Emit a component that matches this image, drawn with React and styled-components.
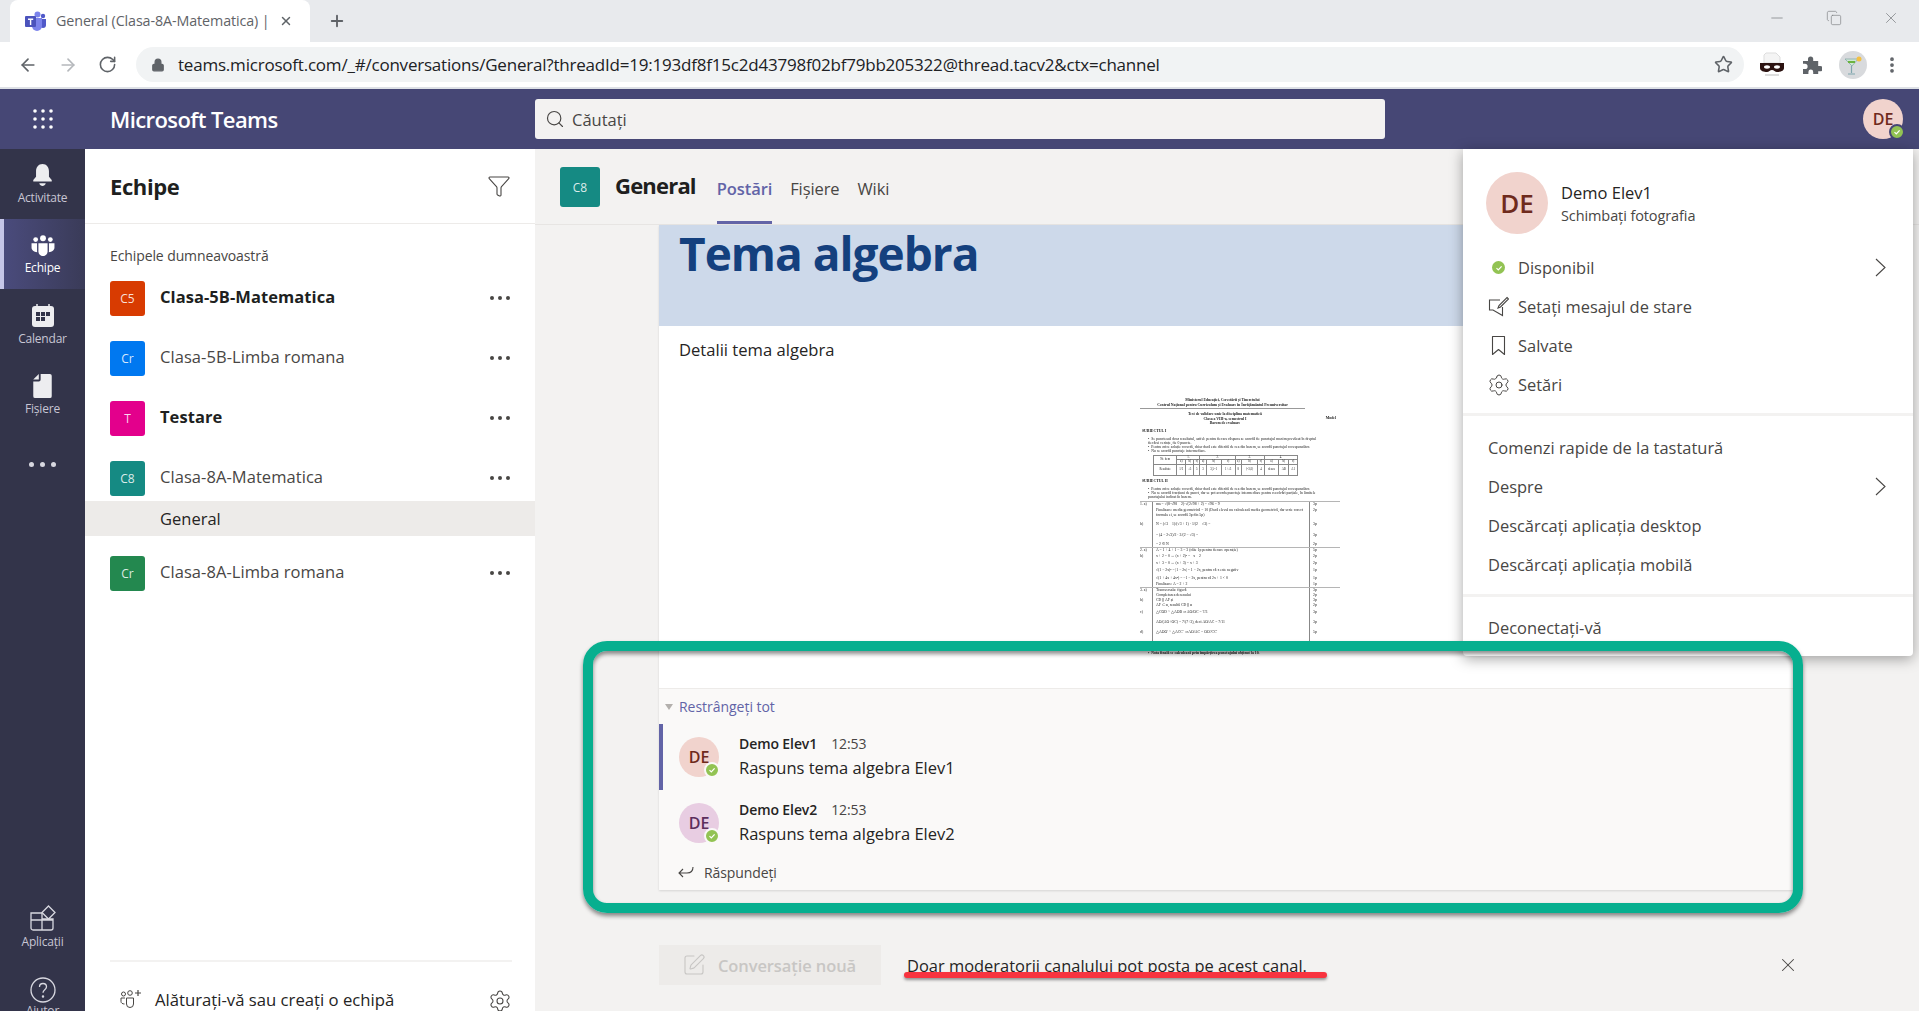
import React from 'react';
import styled, { createGlobalStyle } from 'styled-components';
import { Search, Star, X, Settings, Plus, ArrowLeft, ArrowRight, RotateCw, Lock, Minus, Copy, Filter, SquarePen, MoreVertical } from 'lucide-react';

const FONT = '"Open Sans", "Noto Sans", sans-serif';

const Global = createGlobalStyle`
  html, body { margin: 0; padding: 0; background: #f3f2f1; }
  body { font-family: ${FONT}; color: #252423; }
  * { box-sizing: border-box; }
`;
const Page = styled.div`width: 1919px; height: 1011px; position: relative; overflow: hidden; display: flex; flex-direction: column; background: #f3f2f1;`;

/* browser chrome */
const TabStrip = styled.div`height: 42px; flex: none; background: #e8eaed; display: flex; align-items: stretch; padding-left: 10px;`;
const Tab = styled.div`width: 300px; background: #fff; border-radius: 8px 8px 0 0; display: flex; align-items: center; padding-left: 15px; gap: 10px; font-size: 14.300px; color: #5f6368; letter-spacing: -0.1px;`;
const TabTitle = styled.span`width: 213px; white-space: nowrap; margin-top: -2px;`;
const NewTab = styled.div`width: 54px; display: flex; align-items: center; justify-content: center; color: #5f6368;`;
const WinControls = styled.div`margin-left: auto; display: flex; align-items: center; gap: 40px; padding-right: 19px; padding-bottom: 6px; color: #7b7e82;`;
const Toolbar = styled.div`height: 47px; flex: none; background: #fff; border-bottom: 2px solid #dee1e6; display: flex; align-items: flex-start; padding: 5px 0 0 18px; color: #5f6368;`;
const NavBtn = styled.div`width: 40px; height: 35px; display: flex; align-items: center; justify-content: flex-start; color: ${p => p.$dim ? '#b5b8bc' : '#5f6368'};`;
const Address = styled.div`width: 1608px; height: 35px; margin-left: -2px; background: #f1f3f4; border-radius: 18px; display: flex; align-items: center; padding-left: 15px; gap: 13px; font-size: 17px; color: #202124; letter-spacing: -0.21px;`;
const Url = styled.span`flex: 1; white-space: nowrap;`;
const Ext = styled.div`display: flex; align-items: center; height: 35px; color: #5f6368; margin-left: ${p => p.$ml}px;`;
const ProfileDot = styled.div`width: 28px; height: 28px; border-radius: 50%; background: #d8dadd; display: flex; align-items: center; justify-content: center;`;

/* teams header */
const TopBar = styled.div`height: 60px; flex: none; background: #464775; display: flex; align-items: center; position: relative;`;
const Waffle = styled.div`width: 85px; display: flex; justify-content: center;`;
const Brand = styled.div`width: 450px; padding-left: 25px; color: #fff; font-size: 22px; font-weight: 600; letter-spacing: -0.58px;`;
const SearchBox = styled.div`width: 850px; height: 40px; background: #f3f2f1; border-radius: 3px; display: flex; align-items: center; padding-left: 10px; gap: 7px; color: #484644; font-size: 16.500px;`;
const Avatar = styled.div`
  width: ${p => p.$s}px; height: ${p => p.$s}px; border-radius: 50%; flex: none; position: relative;
  background: ${p => p.$bg || '#f1d3cd'}; color: ${p => p.$fg || '#6f2a1c'};
  display: flex; align-items: center; justify-content: center; font-size: ${p => p.$fs}px; font-weight: 600;
`;
const TopAvatarSlot = styled.div`margin-left: auto; padding-right: 16px;`;
const Badge = styled.span`
  position: absolute; right: ${p => p.$o ?? -2}px; bottom: ${p => p.$o ?? -1}px; width: 16px; height: 16px; border-radius: 50%;
  background: #92c353; border: 2px solid ${p => p.$ring}; display: flex; align-items: center; justify-content: center;
`;
const StatusDot = styled.span`width: 13px; height: 13px; border-radius: 50%; background: #92c353; display: flex; align-items: center; justify-content: center;`;

/* body */
const Body = styled.div`flex: 1; display: flex; min-height: 0;`;
const Rail = styled.nav`width: 85px; flex: none; background: #33344a; display: flex; flex-direction: column; overflow: hidden;`;
const RailItem = styled.div`
  height: 70px; flex: none; position: relative; display: flex; flex-direction: column; align-items: center; padding-top: ${p => p.$pt ?? 15}px;
  font-size: 12px; letter-spacing: -0.2px; color: ${p => p.$active ? '#fff' : '#c8c6d4'};
  background: ${p => p.$active ? 'linear-gradient(90deg,#4a4b7c,#3a3b58)' : 'transparent'};
  border-left: ${p => p.$active ? '4px solid #c5c6e8' : 'none'};
  padding-right: ${p => p.$active ? '4px' : '0'};
  margin-top: ${p => p.$mt || 0}px;
`;
const RailLabel = styled.span`margin-top: ${p => p.$mt ?? 3}px; line-height: 16px; white-space: nowrap;`;
const RailDots = styled.div`height: 40px; display: flex; align-items: center; justify-content: center; gap: 6px; flex: none; margin-top: 15px;`;
const Dot = styled.i`width: ${p => p.$s || 4}px; height: ${p => p.$s || 4}px; border-radius: 50%; background: ${p => p.$c || '#d8d8e0'}; display: block;`;

const Side = styled.aside`width: 450px; flex: none; background: #fff; display: flex; flex-direction: column; overflow: hidden;`;
const SideHead = styled.div`height: 75px; flex: none; border-bottom: 1px solid #edebe9; display: flex; align-items: center; justify-content: space-between; padding: 0 24px 0 25px; font-size: 22px; font-weight: 700; color: #201f1e; letter-spacing: -0.4px;`;
const SideCaption = styled.div`height: 26px; margin-top: 18px; flex: none; padding-left: 25px; font-size: 14px; line-height: 28px; color: #484644; letter-spacing: -0.1px;`;
const TeamRow = styled.div`height: ${p => p.$h || 60}px; flex: none; display: flex; align-items: center; padding: 0 25px; margin-top: ${p => p.$mt || 0}px;`;
const Tile = styled.div`
  width: ${p => p.$s || 35}px; height: ${p => p.$s || 35}px; flex: none; border-radius: 3px; background: ${p => p.$bg}; color: rgba(255,255,255,.85);
  display: flex; align-items: center; justify-content: center; font-size: 12px;
`;
const TeamName = styled.span`
  margin: -4px 0 0 15px; flex: 1; font-size: 16.500px; letter-spacing: 0.06px; color: ${p => p.$bold ? '#201f1e' : '#484644'}; font-weight: ${p => p.$bold ? 700 : 400};
`;
const Dots = styled.div`display: flex; gap: 4px;`;
const Channel = styled.div`height: 35px; flex: none; margin-top: -7px; position: relative; background: #edebe9; padding-left: 75px; line-height: 35px; font-size: 16.500px; color: #252423;`;
const FootText = styled.span`margin-left: 13px; flex: 1; line-height: 22px;`;
const FootWrap = styled.div`margin-top: auto; height: 91px; flex: none; margin-left: 25px; margin-right: 23px; border-top: 2px solid #f3f2f1; padding: 27px 0 0 10px; display: flex; align-items: flex-start; font-size: 16.700px; color: #252423; margin-bottom: -40px;`;

const Main = styled.main`flex: 1; min-width: 0; display: flex; flex-direction: column; overflow: hidden;`;
const MainHead = styled.div`height: 76px; flex: none; display: flex; align-items: stretch; padding-left: 25px; border-bottom: 1px solid #e7e5e3;`;
const HeadTile = styled.div`align-self: flex-start; margin-top: 18px;`;
const ChannelTitle = styled.div`margin-left: 15px; font-size: 22px; font-weight: 700; line-height: 36px; padding-top: 18px; color: #201f1e; letter-spacing: -0.8px;`;
const Tabs = styled.div`display: flex; gap: 18px; margin-left: 21px;`;
const TabLink = styled.div`
  font-size: 16.500px; line-height: 22px; padding-top: 29px; height: 75px; color: ${p => p.$on ? '#6264a7' : '#484644'}; font-weight: ${p => p.$on ? 600 : 400};
  border-bottom: 3px solid ${p => p.$on ? '#6264a7' : 'transparent'}; letter-spacing: -0.1px;
`;
const Card = styled.article`width: 1134px; margin-left: 124px; flex: none; background: #fff; box-shadow: 0 1px 2px rgba(0,0,0,.12);`;
const Hero = styled.div`height: 101px; background: #cdd9ea; padding: 0 20px; color: #14407e; font-size: 46px; font-weight: 700; line-height: 56px; letter-spacing: -1px;`;
const CardBody = styled.div`height: 362px; padding: 12px 20px 0; overflow: hidden; font-size: 16.600px; line-height: 23px; color: #252423;`;
const Thread = styled.div`height: 202px; background: #faf9f8; border-top: 1px solid #edebe9; display: flex; flex-direction: column;`;
const Collapse = styled.div`height: 35px; flex: none; padding-left: 6px; display: flex; align-items: center; gap: 6px; color: #6264a7; font-size: 14px; letter-spacing: -0.03px;`;
const Caret = styled.i`width: 0; height: 0; border: 4px solid transparent; border-top: 6px solid #b3b0ad; border-bottom: 0; margin-left: 0;`;
const Reply = styled.div`
  height: 66px; flex: none; display: flex; padding: 13px 0 0 ${p => p.$on ? 16 : 20}px; border-left: ${p => p.$on ? '4px solid #6264a7' : 'none'};
`;
const ReplyText = styled.div`margin-left: 20px;`;
const Meta = styled.div`display: flex; gap: 14px; font-size: 14px; line-height: 20px; margin-top: -3px; color: #484644; letter-spacing: -0.1px;`;
const Who = styled.b`font-weight: 600; color: #252423;`;
const Msg = styled.div`font-size: 16.500px; line-height: 28px; color: #252423;`;
const Answer = styled.div`height: 34px; margin-top: -1px; padding-left: 19px; display: flex; align-items: center; gap: 10px; font-size: 14px; color: #484644; letter-spacing: -0.1px;`;
const Bottom = styled.div`height: 40px; margin-top: 55px; margin-left: 124px; flex: none; display: flex; align-items: center; width: 1140px;`;
const NewBtn = styled.div`width: 222px; height: 40px; background: #edebe9; display: flex; align-items: center; padding-left: 23px; gap: 12px; color: #c8c6c4; font-size: 16.500px; font-weight: 600; letter-spacing: -0.1px;`;
const Notice = styled.div`margin-left: 26px; flex: 1; font-size: 16.450px; color: #252423;`;
const CloseIcon = styled.div`color: #484644; display: flex;`;

/* menu */
const Menu = styled.div`position: absolute; left: 1463px; top: 149px; width: 450px; height: 507px; background: #fff; border-radius: 0 0 4px 4px; box-shadow: 0 3px 14px rgba(0,0,0,.35); color: #484644; font-size: 16.450px;`;
const MenuHead = styled.div`height: 99px; padding: 23px 0 0 23px; display: flex; gap: 13px;`;
const MenuName = styled.div`font-size: 16.500px; line-height: 24px; margin-top: 9px; color: #252423; font-weight: 500;`;
const MenuSub = styled.div`font-size: 14.500px; line-height: 22px; color: #484644; letter-spacing: -0.1px;`;
const MenuList = styled.div`padding: ${p => p.$pad || '0'}; border-bottom: ${p => p.$last ? 'none' : '3px solid #f3f2f1'};`;
const MenuRow = styled.div`height: 39px; display: flex; align-items: center; padding: 0 27px 0 25px;`;
const MenuIcon = styled.div`width: 30px; flex: none; display: flex; padding-left: ${p => p.$pl || 0}px;`;
const Grow = styled.span`flex: 1;`;

/* annotations */
const GreenBox = styled.div`position: absolute; left: 583px; top: 641px; width: 1220px; height: 272px; border: 10px solid #07af8f; border-radius: 24px; box-shadow: 0 3px 4px rgba(0,0,0,.45), inset 0 3px 4px rgba(0,0,0,.45); pointer-events: none; `;
const RedLine = styled.div`position: absolute; left: 904px; top: 972px; width: 423px; height: 6px; border-radius: 3px; background: #f8333f; box-shadow: 0 2px 3px rgba(0,0,0,.4);`;

/* scanned document */
const Doc = styled.div`margin: 37px 0 0 461px; width: 200px; font-family: "Liberation Serif", serif; font-size: 3.800px; line-height: 4.600px; color: #222; filter: blur(0.25px);`;
const DocHead = styled.div`width: 165px; text-align: center; font-weight: 700; border-bottom: 1px solid #999; padding-bottom: 1px;`;
const DocTitle = styled.div`width: 170px; margin-top: 3px; text-align: center; font-weight: 700; position: relative;`;
const DocModel = styled.span`position: absolute; right: -26px; top: 4px;`;
const DocSub = styled.div`font-weight: 700; margin: ${p => p.$m || '3px 0 3px 2px'};`;
const DocBullet = styled.div`margin-left: 8px; width: 172px; line-height: 4.300px; font-weight: ${p => p.$b ? 700 : 400}; &::before { content: "•"; margin-right: 2px; }`;
const DocTable = styled.table`margin: 1px 0 2px 13px; width: 145px; border-collapse: collapse; font-size: 3px; line-height: 3.400px; td { border: 0.6px solid #888; text-align: center; padding: 0; height: 4.500px; }`;
const DocTallCell = styled.td`&& { height: 11.500px; }`;
const DocGroup = styled.div`border-top: 1px solid #b5b5b5; margin-top: ${p => p.$mt || 0}px;`;
const DocRow = styled.div`display: grid; grid-template-columns: 12px 157px 31px; height: ${p => p.$h || 5}px; align-items: center;`;
const DocCell = styled.span`height: 100%; display: flex; align-items: center; padding-left: ${p => p.$pl || 0}px; border-left: ${p => p.$line ? '0.7px solid #888' : 'none'}; white-space: nowrap; overflow: hidden;`;

const check = (
  <svg width="8" height="8" viewBox="0 0 8 8"><path d="M1.500 4.200 3.300 6 6.600 2.300" fill="none" stroke="#fff" strokeWidth="1.200" /></svg>
);

const TeamsLogo = () => (
  <svg width="21" height="20" viewBox="0 0 21 20">
    <circle cx="12.500" cy="3.500" r="3" fill="#7b83eb" /><circle cx="18" cy="5" r="2.200" fill="#5059c9" />
    <path d="M15 8h6v6a3 3 0 0 1-6 0z" fill="#5059c9" /><path d="M7 7h10v8a5 5 0 0 1-10 0z" fill="#7b83eb" />
    <rect x="0" y="5" width="11" height="11" rx="1" fill="#4b53bc" />
    <path d="M3 7.500h5.200v1.400H6.300v5H4.900v-5H3z" fill="#fff" />
  </svg>
);

const MaskIcon = () => (
  <svg width="26" height="26" viewBox="0 0 26 26">
    <path d="M7 1h10l4 4v6H5V3z" fill="#f4f4f4" stroke="#ddd" /><path d="M1 11h24v5c0 3-4 4-7 4-2 0-3-2-5-2s-3 2-5 2c-3 0-7-1-7-4z" fill="#2b1210" />
    <ellipse cx="8" cy="15" rx="3" ry="1.700" fill="#fff" /><ellipse cx="18" cy="15" rx="3" ry="1.700" fill="#fff" />
    <rect x="6" y="22" width="14" height="2" fill="#ddd" />
  </svg>
);
const PuzzleIcon = () => (
  <svg width="20" height="20" viewBox="0 0 20 20" fill="#5f6368">
    <path d="M1 6h5V4a2.600 2.600 0 0 1 5.200 0v2h5v5h2a2.600 2.600 0 0 1 0 5.200h-2V19h-5v-2a2.400 2.400 0 0 0-4.800 0v2H1v-5h2a2.600 2.600 0 0 0 0-5.200H1z" />
  </svg>
);
const Cocktail = () => (
  <svg width="20" height="22" viewBox="0 0 20 22">
    <path d="M2 5h13l-6 7z" fill="#cfe8d4" stroke="#8aa" strokeWidth=".8" /><path d="M5 8h7" stroke="#6cb33f" strokeWidth="2" />
    <path d="M8.500 12v7M5 20h7" stroke="#7fa6ad" strokeWidth="1.200" /><circle cx="16" cy="5" r="2.500" fill="#f2c043" />
  </svg>
);
const Bell = () => (
  <svg width="23" height="24" viewBox="0 0 24 26" fill="#ededf0">
    <path d="M12 1c-4.500 0-7 3.500-7 8v6l-3 3.500V20h20v-1.500L19 15V9c0-4.500-2.500-8-7-8z" /><path d="M8.500 22h7c-.5 2-2 3-3.500 3s-3-1-3.500-3z" />
  </svg>
);
const TeamsGlyph = () => (
  <svg width="26" height="22" viewBox="0 0 28 24" fill="#fff">
    <circle cx="14" cy="3.500" r="3.200" /><circle cx="6" cy="5" r="2.600" /><circle cx="22" cy="5" r="2.600" />
    <path d="M9 9h10v9c0 3-2.500 5-5 5s-5-2-5-5z" /><path d="M1.500 9H7.500v8c0 .7.100 1.300.2 1.800C4 18.500 1.500 16.500 1.500 14zM20.500 9h6v5c0 2.500-2.500 4.500-6.200 4.800.1-.5.200-1.100.2-1.800z" />
  </svg>
);
const CalGlyph = () => (
  <svg width="24" height="24" viewBox="0 0 24 24">
    <rect x="1" y="2" width="22" height="21" rx="3" fill="#ededf0" />
    <path d="M6 0v3M18 0v3" stroke="#ededf0" strokeWidth="1.500" />
    <g fill="#33344a"><rect x="5" y="8" width="4" height="4" /><rect x="10" y="8" width="4" height="4" /><rect x="15" y="8" width="4" height="4" /><rect x="5" y="13" width="4" height="4" /><rect x="10" y="13" width="4" height="4" /></g>
  </svg>
);
const FileGlyph = () => (
  <svg width="19" height="24" viewBox="0 0 20 26" fill="#ededf0">
    <path d="M8 0h10a2 2 0 0 1 2 2v22a2 2 0 0 1-2 2H2a2 2 0 0 1-2-2V8h6a2 2 0 0 0 2-2z" /><path d="M6 0v6H0z" />
  </svg>
);
const AppsGlyph = () => (
  <svg width="26" height="26" viewBox="0 0 26 26" fill="none" stroke="#d8d8e0" strokeWidth="1.300">
    <path d="M1 8h11v17H3a2 2 0 0 1-2-2zM12 25h9a2 2 0 0 0 2-2V14H12M1 15h22" /><path d="m18.500 1 6.500 6.500-6.500 6.500L12 7.500z" />
  </svg>
);
const HelpGlyph = () => (
  <svg width="26" height="26" viewBox="0 0 26 26" fill="none" stroke="#d8d8e0" strokeWidth="1.300">
    <circle cx="13" cy="13" r="12" /><path d="M9.500 10c0-2 1.500-3.500 3.500-3.500s3.500 1.500 3.500 3.300c0 3-3.500 3-3.500 6" /><circle cx="13" cy="19.500" r=".6" />
  </svg>
);
const JoinGlyph = () => (
  <svg width="22" height="20" viewBox="0 0 22 20" fill="none" stroke="#484644" strokeWidth="1">
    <circle cx="3.500" cy="5" r="2" /><circle cx="10" cy="4" r="2.300" /><path d="M6.500 9h7v6a3.500 3.500 0 0 1-7 0z" /><path d="M5 9H1v3.500c0 1.500 1.500 2.500 3.500 2.500" /><path d="M15 4h6M18 1v6" strokeWidth="1.200" />
  </svg>
);
const StatusNote = () => (
  <svg width="21" height="21" viewBox="0 0 21 21" fill="none" stroke="#484644" strokeWidth="1.100">
    <path d="M12 4H1.500v10h3.500l9.500 5.500V11" /><path d="M19 1.500l1.500 1.500-8 8-2.500 1 1-2.500z" />
  </svg>
);
const BookmarkGlyph = () => (
  <svg width="15" height="21" viewBox="0 0 15 21" fill="none" stroke="#484644" strokeWidth="1.100">
    <path d="M1.500 1.500h12v18l-6-5-6 5z" strokeLinejoin="round" />
  </svg>
);
const Chevron = () => (
  <svg width="11" height="19" viewBox="0 0 11 19" fill="none" stroke="#484644" strokeWidth="1.100">
    <path d="m1 1 9 8.500L1 18" />
  </svg>
);
const ReplyArrow = () => (
  <svg width="16" height="12" viewBox="0 0 16 12" fill="none" stroke="#484644" strokeWidth="1.100">
    <path d="M15 1c0 4-2 6-6 6H1M5 3 1 7l4 4" />
  </svg>
);

const teams = [
  { t: 'C5', bg: '#d83b01', n: 'Clasa-5B-Matematica', b: true },
  { t: 'Cr', bg: '#0078f0', n: 'Clasa-5B-Limba romana' },
  { t: 'T', bg: '#e3008c', n: 'Testare', b: true },
  { t: 'C8', bg: '#158a83', n: 'Clasa-8A-Matematica' },
];
const TeamLine = ({ t, bg, n, b, mt }) => (
  <TeamRow $mt={mt}>
    <Tile $bg={bg}>{t}</Tile>
    <TeamName $bold={b}>{n}</TeamName>
    <Dots><Dot $c="#484644" /><Dot $c="#484644" /><Dot $c="#484644" /></Dots>
  </TeamRow>
);

const answerRows = [
  [
    ['1. a)', 'ma = √(8·√98 − 2)·√(2√98 + 2) = √96 = 9', '3p', 6],
    ['', 'Finalizare: media geometrică = 10 (Dacă elevul nu calculează media geometrică, dar scrie corect', '2p', 5],
    ['', 'formula ei, se acordă 3p din 5p)', '', 6],
    ['b)', 'N = (√3 − 1)/(√3 + 1) · 1/(2 − √3) =', '3p', 11],
    ['', '= (4 − 2√3)/2 · 2/(2 − √3) =', '3p', 12],
    ['', '= 2 ∈ N', '2p', 5],
  ],
  [
    ['2. a)', 'A = 1 + 4 + 1 − 3 = 3 (câte 1p pentru fiecare operație)', '5p', 6],
    ['b)', 'x + 2 = 0 ⇔ (x + 2)² = −x − 2', '2p', 6],
    ['', 'x + 3 = 0 ⇔ (x + 3) = x + 3', '2p', 7],
    ['', '√(1 − 2x)² = |1 − 2x| = 1 − 2x, pentru că x este negativ', '1p', 8],
    ['', '√(1 + 4x + 4x²) = −1 − 2x, pentru că 2x + 1 < 0', '1p', 7],
    ['', 'Finalizare: A = 2 + 2', '1p', 5],
  ],
  [
    ['3. a)', 'Transversala: figură', '3p', 5],
    ['', 'Completarea desenului', '2p', 5],
    ['b)', 'CD ∥ AF și', '3p', 5],
    ['', 'AF ⊂ α, rezultă CD ∥ α', '2p', 5],
    ['c)', '△COD ~ △AOB ⇒ AO/OC = 7/3', '3p', 9],
    ['', 'AO/(AO+OC) = 7/(7+3), deci AO/AC = 7/11', '3p', 11],
    ['d)', '△AOO′ ~ △ACC′ ⇒ AO/AC = OO′/CC′', '5p', 9],
    ['', 'OO′ = 7', '', 14],
  ],
];

const ScannedDoc = () => (
  <Doc>
    <DocHead>
      <div>Ministerul Educației, Cercetării și Tineretului</div>
      <div>Centrul Național pentru Curriculum și Evaluare în Învățământul Preuniversitar</div>
    </DocHead>
    <DocTitle>
      <div>Test de validare unic la disciplina matematică</div>
      <div>Clasa a VIII-a, semestrul I<DocModel>Model</DocModel></div>
      <div>Barem de evaluare</div>
    </DocTitle>
    <DocSub>SUBIECTUL I</DocSub>
    <DocBullet>Se punctează doar rezultatul, astfel: pentru fiecare răspuns se acordă fie punctajul maxim prevăzut în dreptul fiecărei cerințe, fie 0 puncte.</DocBullet>
    <DocBullet>Pentru orice soluție corectă, chiar dacă este diferită de cea din barem, se acordă punctajul corespunzător.</DocBullet>
    <DocBullet>Nu se acordă punctaje intermediare.</DocBullet>
    <DocTable>
      <tbody>
        <tr><td rowSpan="2">Nr. item</td><td colSpan="3">1.</td><td colSpan="3">2.</td><td colSpan="3">3.</td><td colSpan="3">4.</td></tr>
        <tr>{['a)', 'b)', 'c)', 'a)', 'b)', 'c)', 'a)', 'b)', 'c)', 'a)', 'b)', 'c)'].map((x, i) => <td key={i}>{x}</td>)}</tr>
        <tr><DocTallCell>Rezultate</DocTallCell>{['1/2', '√5', '5', '3', '3,5−1', '1+√3', '8', '{-3;3}', '4', 'deseu', 'AB', 'A1'].map((x, i) => <td key={i}>{x}</td>)}</tr>
      </tbody>
    </DocTable>
    <DocSub $m="3px 0 3px 2px">SUBIECTUL II</DocSub>
    <DocBullet>Pentru orice soluție corectă, chiar dacă este diferită de cea din barem, se acordă punctajul corespunzător.</DocBullet>
    <DocBullet>Nu se acordă fracțiuni de punct, dar se pot acorda punctaje intermediare pentru rezolvări parțiale, în limitele punctajului indicat în barem.</DocBullet>
    {answerRows.map((g, i) => (
      <DocGroup key={i} $mt={i === 0 ? 1 : 0}>
        {g.map((r, j) => (
          <DocRow key={j} $h={r[3]}>
            <DocCell>{r[0]}</DocCell>
            <DocCell $line $pl={3}>{r[1]}</DocCell>
            <DocCell $line $pl={3}>{r[2]}</DocCell>
          </DocRow>
        ))}
      </DocGroup>
    ))}
    <DocBullet $b>Nota finală se calculează prin împărțirea punctajului obținut la 10.</DocBullet>
  </Doc>
);

export default function App() {
  return (
    <Page>
      <Global />
      <TabStrip>
        <Tab>
          <TeamsLogo />
          <TabTitle>General (Clasa-8A-Matematica) |</TabTitle>
          <X size={14} strokeWidth={2.5} />
        </Tab>
        <NewTab><Plus size={18} strokeWidth={2.5} /></NewTab>
        <WinControls>
          <Minus size={18} strokeWidth={1} />
          <Copy size={16} strokeWidth={1} />
          <X size={18} strokeWidth={1} />
        </WinControls>
      </TabStrip>
      <Toolbar>
        <NavBtn><ArrowLeft size={20} strokeWidth={2} /></NavBtn>
        <NavBtn $dim><ArrowRight size={20} strokeWidth={2} /></NavBtn>
        <NavBtn><RotateCw size={19} strokeWidth={2} /></NavBtn>
        <Address>
          <Lock size={14} fill="#5f6368" strokeWidth={2} color="#5f6368" />
          <Url>teams.microsoft.com/_#/conversations/General?threadId=19:193df8f15c2d43798f02bf79bb205322@thread.tacv2&amp;ctx=channel</Url>
          <Star size={19} strokeWidth={2} color="#5f6368" style={{ marginRight: 11 }} />
        </Address>
        <Ext $ml={15}><MaskIcon /></Ext>
        <Ext $ml={17}><PuzzleIcon /></Ext>
        <Ext $ml={17}><ProfileDot><Cocktail /></ProfileDot></Ext>
        <Ext $ml={15}><MoreVertical size={20} strokeWidth={2.5} /></Ext>
      </Toolbar>
      <TopBar>
        <Waffle>
          <svg width="20" height="20" viewBox="0 0 20 20" fill="#fff">
            {[2, 10, 18].flatMap(y => [2, 10, 18].map(x => <circle key={`${x}-${y}`} cx={x} cy={y} r="1.800" />))}
          </svg>
        </Waffle>
        <Brand>Microsoft Teams</Brand>
        <SearchBox><Search size={20} strokeWidth={1.4} />Căutați</SearchBox>
        <TopAvatarSlot>
          <Avatar $s={40} $fs={16}>DE<Badge $ring="#464775">{check}</Badge></Avatar>
        </TopAvatarSlot>
      </TopBar>
      <Body>
        <Rail>
          <RailItem $pt={14}><Bell /><RailLabel>Activitate</RailLabel></RailItem>
          <RailItem $active $pt={16}><TeamsGlyph /><RailLabel>Echipe</RailLabel></RailItem>
          <RailItem><CalGlyph /><RailLabel>Calendar</RailLabel></RailItem>
          <RailItem><FileGlyph /><RailLabel>Fișiere</RailLabel></RailItem>
          <RailDots><Dot $s={5} /><Dot $s={5} /><Dot $s={5} /></RailDots>
          <RailItem $mt={408} $pt={13}><AppsGlyph /><RailLabel>Aplicații</RailLabel></RailItem>
          <RailItem $pt={15}><HelpGlyph /><RailLabel $mt={0}>Ajutor</RailLabel></RailItem>
        </Rail>
        <Side>
          <SideHead>Echipe<Filter size={24} strokeWidth={1.1} color="#484644" /></SideHead>
          <SideCaption>Echipele dumneavoastră</SideCaption>
          {teams.map(t => <TeamLine key={t.n} {...t} />)}
          <Channel>General</Channel>
          <TeamLine t="Cr" bg="#23884f" n="Clasa-8A-Limba romana" mt={7} />
          <FootWrap>
            <JoinGlyph />
            <FootText>Alăturați-vă sau creați o echipă</FootText>
            <Settings size={24} strokeWidth={1.05} color="#484644" />
          </FootWrap>
        </Side>
        <Main>
          <MainHead>
            <HeadTile><Tile $s={40} $bg="#158a83">C8</Tile></HeadTile>
            <ChannelTitle>General</ChannelTitle>
            <Tabs>
              <TabLink $on>Postări</TabLink>
              <TabLink>Fișiere</TabLink>
              <TabLink>Wiki</TabLink>
            </Tabs>
          </MainHead>
          <Card>
            <Hero>Tema algebra</Hero>
            <CardBody>
              Detalii tema algebra
              <ScannedDoc />
            </CardBody>
            <Thread>
              <Collapse><Caret />Restrângeți tot</Collapse>
              <Reply $on>
                <Avatar $s={40} $fs={16}>DE<Badge $ring="#faf9f8" $o={-1}>{check}</Badge></Avatar>
                <ReplyText>
                  <Meta><Who>Demo Elev1</Who><span>12:53</span></Meta>
                  <Msg>Raspuns tema algebra Elev1</Msg>
                </ReplyText>
              </Reply>
              <Reply>
                <Avatar $s={40} $fs={16} $bg="#e8cde2" $fg="#5c2e5c">DE<Badge $ring="#faf9f8" $o={-1}>{check}</Badge></Avatar>
                <ReplyText>
                  <Meta><Who>Demo Elev2</Who><span>12:53</span></Meta>
                  <Msg>Raspuns tema algebra Elev2</Msg>
                </ReplyText>
              </Reply>
              <Answer><ReplyArrow />Răspundeți</Answer>
            </Thread>
          </Card>
          <Bottom>
            <NewBtn><SquarePen size={24} strokeWidth={1.1} color="#c8c6c4" />Conversație nouă</NewBtn>
            <Notice>Doar moderatorii canalului pot posta pe acest canal.</Notice>
            <CloseIcon><X size={22} strokeWidth={1.1} /></CloseIcon>
          </Bottom>
        </Main>
      </Body>
      <Menu>
        <MenuHead>
          <Avatar $s={62} $fs={26}>DE</Avatar>
          <div>
            <MenuName>Demo Elev1</MenuName>
            <MenuSub>Schimbați fotografia</MenuSub>
          </div>
        </MenuHead>
        <MenuList $pad="0 0 9px">
          <MenuRow>
            <MenuIcon $pl={4}><StatusDot>{check}</StatusDot></MenuIcon>
            <Grow>Disponibil</Grow>
            <Chevron />
          </MenuRow>
          <MenuRow><MenuIcon><StatusNote /></MenuIcon>Setați mesajul de stare</MenuRow>
          <MenuRow><MenuIcon $pl={3}><BookmarkGlyph /></MenuIcon>Salvate</MenuRow>
          <MenuRow><MenuIcon><Settings size={24} strokeWidth={1} style={{ marginLeft: -1 }} /></MenuIcon>Setări</MenuRow>
        </MenuList>
        <MenuList $pad="12px 0 10px">
          <MenuRow>Comenzi rapide de la tastatură</MenuRow>
          <MenuRow><Grow>Despre</Grow><Chevron /></MenuRow>
          <MenuRow>Descărcați aplicația desktop</MenuRow>
          <MenuRow>Descărcați aplicația mobilă</MenuRow>
        </MenuList>
        <MenuList $last $pad="11px 0 0">
          <MenuRow>Deconectați-vă</MenuRow>
        </MenuList>
      </Menu>
      <GreenBox />
      <RedLine />
    </Page>
  );
}
